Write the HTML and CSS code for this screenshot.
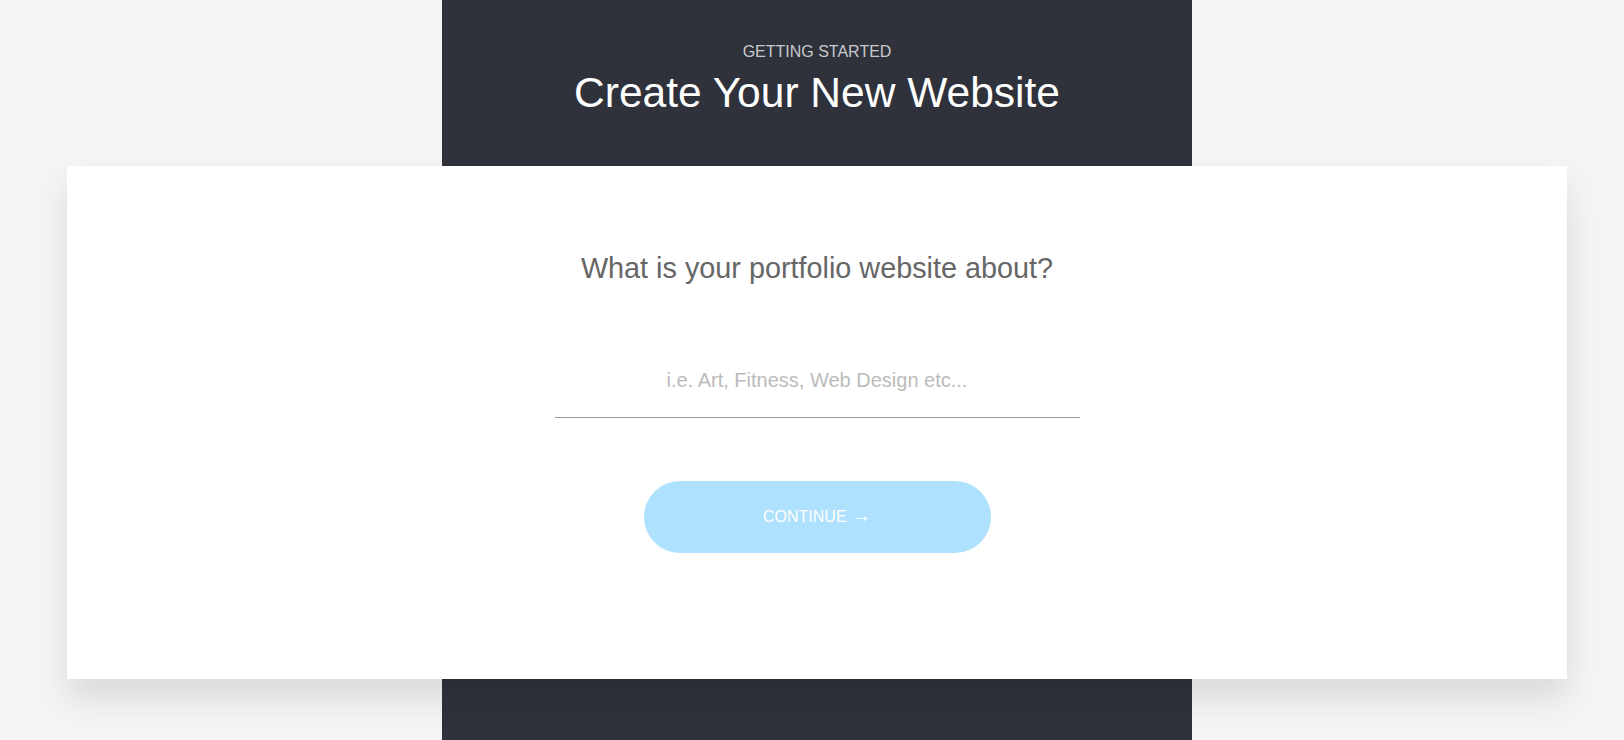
FILE: index.html
```html
<!DOCTYPE html>
<html lang="en">
<head>
<meta charset="utf-8">
<title>Create Your New Website</title>
<link rel="stylesheet" href="styles.css">
</head>
<body>
<div class="page">
  <header class="column column-top">
    <p class="eyebrow">GETTING STARTED</p>
    <h1 class="title">Create Your New Website</h1>
  </header>
  <main class="card">
    <h2 class="question">What is your portfolio website about?</h2>
    <input class="topic-input" type="text" placeholder="i.e. Art, Fitness, Web Design etc...">
    <button class="continue" type="button">CONTINUE <span class="arrow">→</span></button>
  </main>
  <div class="column column-bottom"></div>
</div>
</body>
</html>
```

FILE: styles.css
```css
html, body {
  margin: 0;
  padding: 0;
  height: 740px;
  overflow: hidden;
}

body {
  background: #f4f4f4;
  font-family: "Liberation Sans", Arial, sans-serif;
}

.page {
  display: flex;
  flex-direction: column;
  align-items: center;
  padding-left: 10px;
  height: 740px;
}

.column {
  width: 750px;
  background: #2f323b;
}

.column-top {
  height: 166px;
  box-sizing: border-box;
  padding-top: 43px;
  text-align: center;
}

.column-bottom {
  flex: 1;
}

.eyebrow {
  margin: 0;
  font-size: 16px;
  line-height: 18px;
  color: #c9cacd;
}

.title {
  margin: 8px 0 0;
  font-size: 42.5px;
  line-height: 48px;
  font-weight: 400;
  color: #ffffff;
}

.card {
  position: relative;
  width: 1500px;
  height: 513px;
  box-sizing: border-box;
  padding-top: 85px;
  background: #ffffff;
  box-shadow: 0 20px 30px rgba(0, 0, 0, 0.1);
  display: flex;
  flex-direction: column;
  align-items: center;
}

.question {
  margin: 0;
  font-size: 28.8px;
  line-height: 34px;
  font-weight: 400;
  color: #666666;
}

.topic-input {
  margin-top: 81px;
  width: 525px;
  height: 28px;
  padding: 0 0 23px;
  box-sizing: content-box;
  border: 0;
  border-bottom: 1px solid #999999;
  outline: none;
  background: transparent;
  font-family: "Liberation Sans", Arial, sans-serif;
  font-size: 20px;
  text-align: center;
  color: #555555;
}

.topic-input::placeholder {
  color: #bbbbbb;
}

.continue {
  margin-top: 63px;
  width: 347px;
  height: 72px;
  border: 0;
  border-radius: 36px;
  background: #aee1fd;
  color: #ffffff;
  font-family: "Liberation Sans", Arial, sans-serif;
  font-size: 16px;
  line-height: 20px;
  padding: 0;
  cursor: pointer;
}

.arrow {
  font-size: 20px;
  line-height: 16px;
}
```
